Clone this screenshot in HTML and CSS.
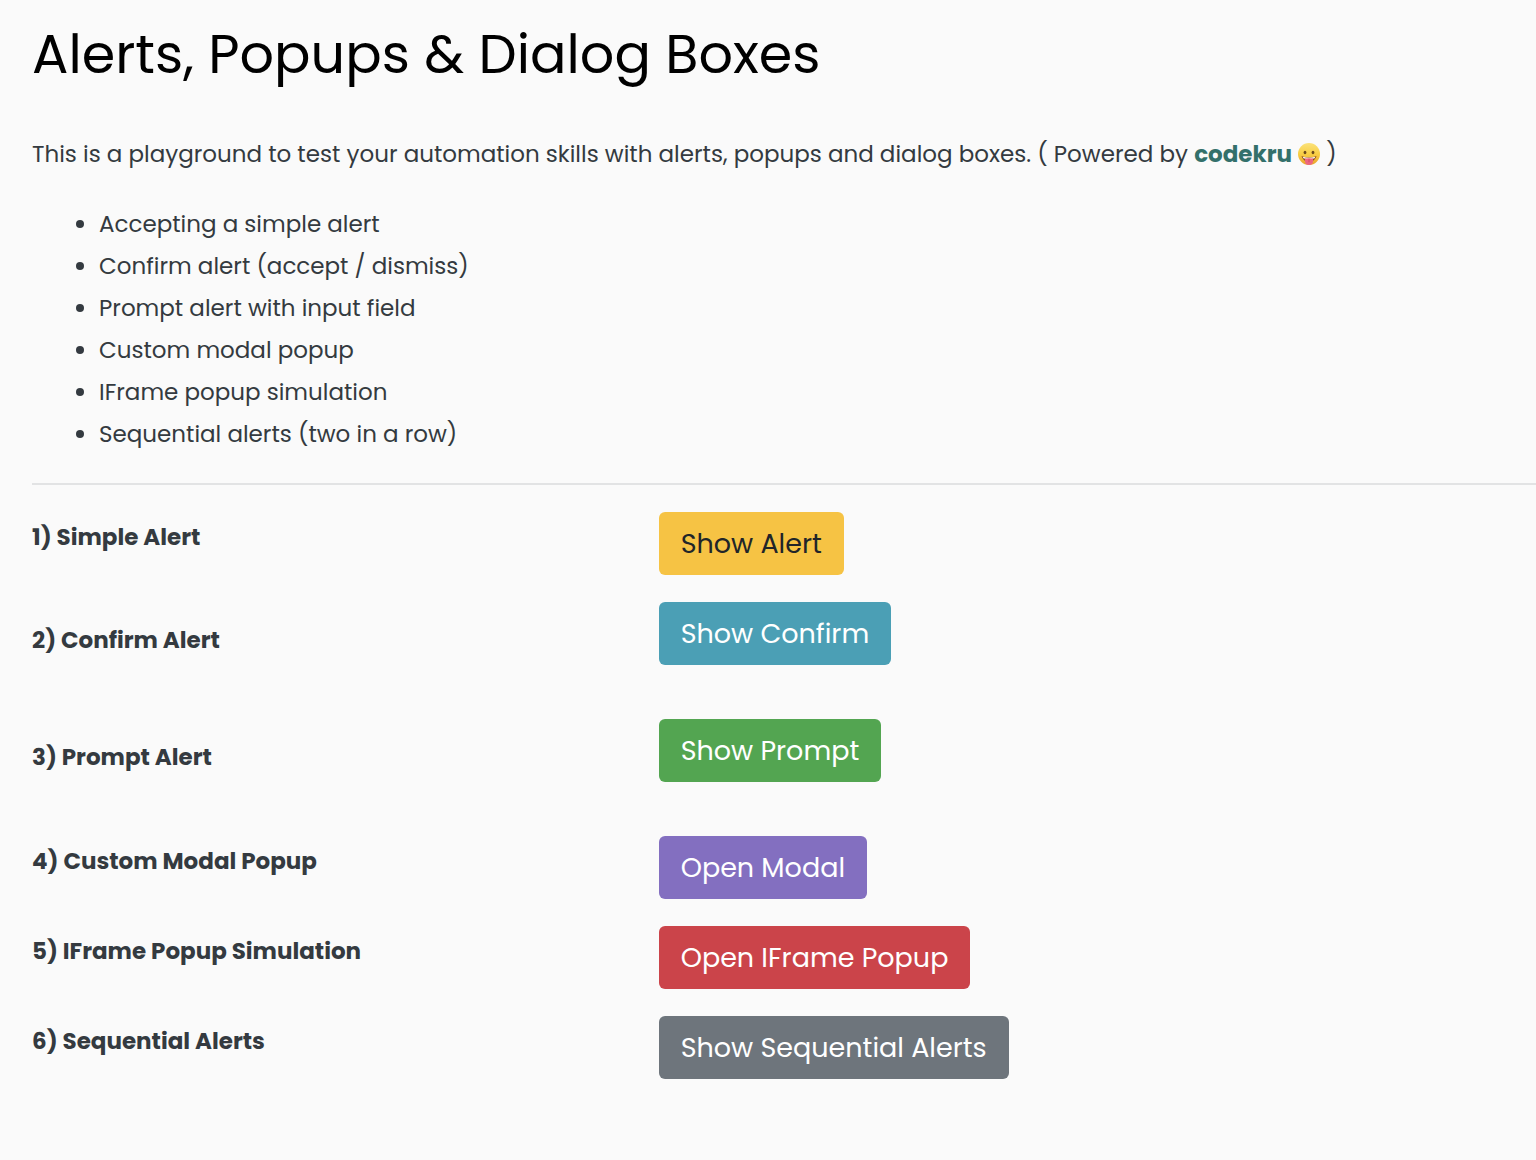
FILE: index.html
```html
<!DOCTYPE html>
<html lang="en">
<head>
    <meta charset="UTF-8">
    <meta name="viewport" content="width=device-width, initial-scale=1">
    <title>Alerts, Popups &amp; Dialog Boxes</title>
    <link rel="stylesheet" href="styles.css">
</head>
<body>
    <main class="container">
        <h1>Alerts, Popups &amp; Dialog Boxes</h1>
        <p class="intro">
            This is a playground to test your automation skills with alerts, popups and dialog boxes. ( Powered by
            <a href="#">codekru</a>
            <svg class="emoji" viewBox="1 1 22 22" aria-hidden="true">
                <defs>
                    <linearGradient id="face" x1="0" y1="0" x2="0" y2="1">
                        <stop offset="0" stop-color="#fbe27a"/>
                        <stop offset="0.5" stop-color="#f8cf45"/>
                        <stop offset="1" stop-color="#e9a02c"/>
                    </linearGradient>
                </defs>
                <circle cx="12" cy="12" r="11" fill="url(#face)"/>
                <ellipse cx="8" cy="10.5" rx="1.4" ry="1.8" fill="#6b4a1c"/>
                <ellipse cx="16" cy="10.500" rx="1.4" ry="1.8" fill="#6b4a1c"/>
                <path d="M4.500 14 Q12 17 19.500 14 Q18 19.500 12 19.500 Q6 19.500 4.500 14Z" fill="#8a4a20"/>
                <path d="M5.800 14.700 Q12 17 18.200 14.700 L17.600 16.200 Q12 18 6.400 16.200Z" fill="#fff"/>
                <path d="M8 16.600 Q12 15.800 16 16.600 V19 A4 4 0 0 1 8 19Z" fill="#ec6680"/>
                <path d="M12 16.800 V20.200" stroke="#cc4765" stroke-width="0.8"/>
            </svg>
            )
        </p>

        <ul>
            <li>Accepting a simple alert</li>
            <li>Confirm alert (accept / dismiss)</li>
            <li>Prompt alert with input field</li>
            <li>Custom modal popup</li>
            <li>IFrame popup simulation</li>
            <li>Sequential alerts (two in a row)</li>
        </ul>

        <hr>

        <div class="row">
            <p class="name" id="simpleLabel">1) Simple Alert</p>
            <div class="action">
                <button type="button" class="btn btn-warning" aria-describedby="simpleLabel">Show Alert</button>
            </div>
        </div>
        <div class="row">
            <p class="name" id="confirmLabel">2) Confirm Alert</p>
            <div class="action">
                <button type="button" class="btn btn-info" aria-describedby="confirmLabel">Show Confirm</button>
                <div class="result" id="confirmResult"></div>
            </div>
        </div>
        <div class="row">
            <p class="name" id="promptLabel">3) Prompt Alert</p>
            <div class="action">
                <button type="button" class="btn btn-success" aria-describedby="promptLabel">Show Prompt</button>
                <div class="result" id="promptResult"></div>
            </div>
        </div>
        <div class="row">
            <p class="name" id="modalLabel">4) Custom Modal Popup</p>
            <div class="action">
                <button type="button" class="btn btn-purple" aria-describedby="modalLabel">Open Modal</button>
            </div>
        </div>
        <div class="row">
            <p class="name" id="iframeLabel">5) IFrame Popup Simulation</p>
            <div class="action">
                <button type="button" class="btn btn-danger" aria-describedby="iframeLabel">Open IFrame Popup</button>
            </div>
        </div>
        <div class="row">
            <p class="name" id="sequentialLabel">6) Sequential Alerts</p>
            <div class="action">
                <button type="button" class="btn btn-secondary" aria-describedby="sequentialLabel">Show Sequential Alerts</button>
            </div>
        </div>
    </main>
</body>
</html>
```
FILE: styles.css
```css
* { box-sizing: border-box; }
body { margin: 0; background: #fafafa; color: #343a40; font-family: Poppins, Inter, sans-serif; font-size: 23px; line-height: 42px; }
.container { padding: 16px 0 64px 32px; }
h1 { margin: 0 0 41px; color: #000; font-size: 54px; font-weight: 400; line-height: 76px; }
p { margin: 0; }
.intro a { color: #33706b; font-weight: 700; text-decoration: none; }
.emoji { width: 22px; height: 22px; vertical-align: -3px; }
ul { margin: 28px 0; padding-left: 67px; }
hr { margin: 0 0 14px; border: 0; border-top: 2px solid #e2e3e4; }

.row { display: flex; align-items: center; padding: 13px 0 14px; }
.name { width: 41.6667%; padding-bottom: 14px; font-weight: 700; }
.action { flex: 1; display: flex; flex-direction: column; align-items: flex-start; }
.result { min-height: 27px; }

.btn { padding: 10px 22px; border: 0; border-radius: 6px; color: #fff; font-family: inherit; font-size: 27px; line-height: 43px; cursor: pointer; }
.btn-warning { background: #f6c344; color: #212529; }
.btn-info { background: #4b9fb5; }
.btn-success { background: #53a551; }
.btn-purple { background: #836fc0; }
.btn-danger { background: #cb444a; }
.btn-secondary { background: #6e757c; }
```
